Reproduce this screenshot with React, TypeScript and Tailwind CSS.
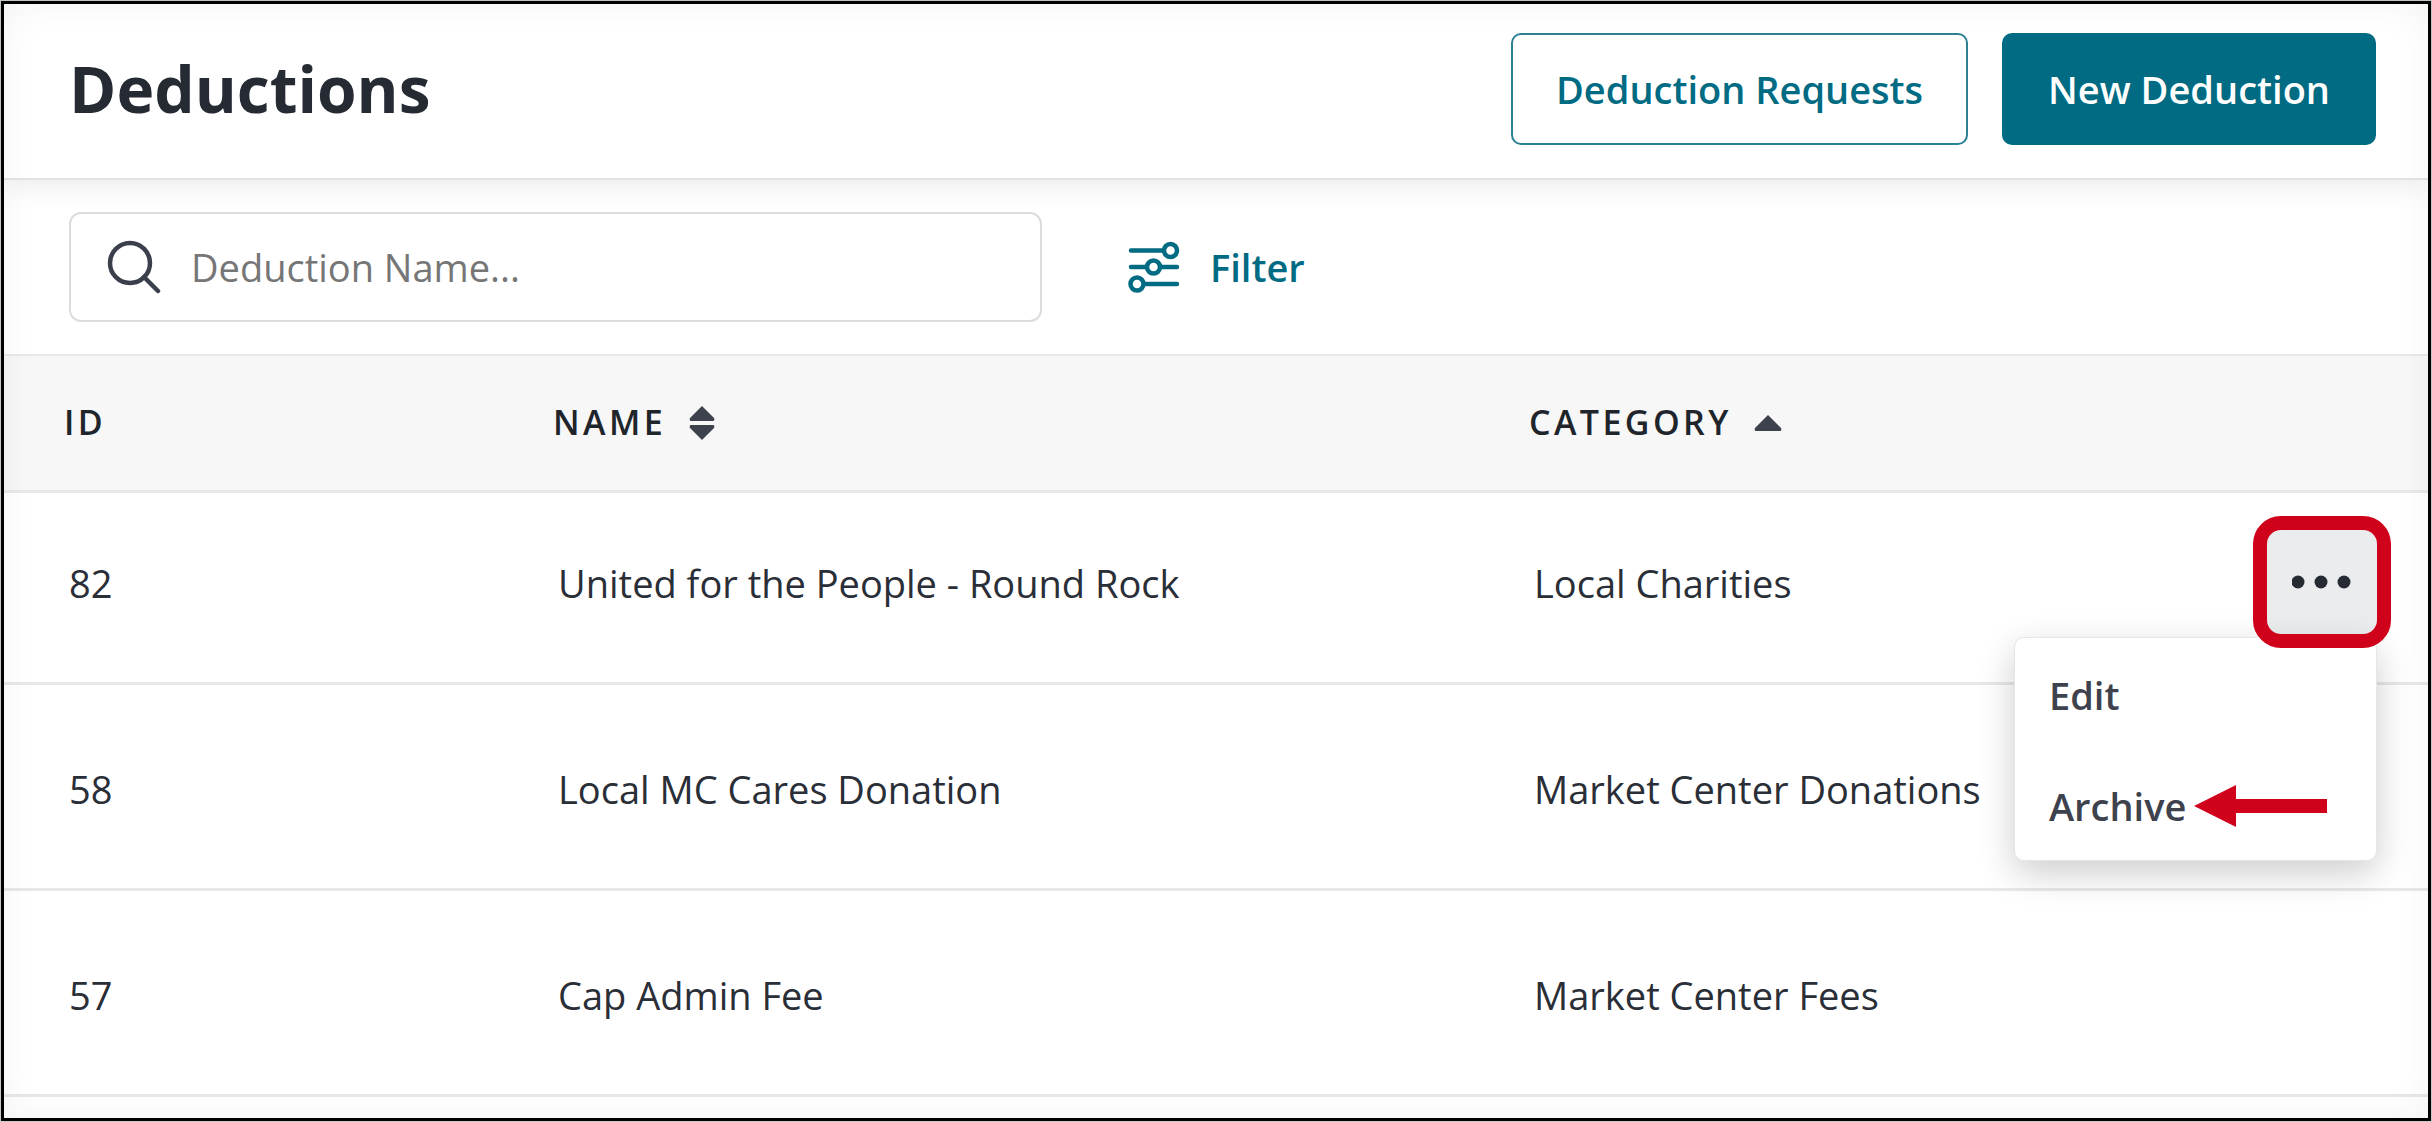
import React from 'react';

interface Deduction {
  id: number;
  name: string;
  category: string;
}

const DEDUCTIONS: Deduction[] = [
  { id: 82, name: 'United for the People - Round Rock', category: 'Local Charities' },
  { id: 58, name: 'Local MC Cares Donation', category: 'Market Center Donations' },
  { id: 57, name: 'Cap Admin Fee', category: 'Market Center Fees' },
];

const App: React.FC = () => (
  <div className="min-h-screen flex bg-[#c4ccc6] p-px font-['Open_Sans',sans-serif] text-[#2a2e37]">
    <div className="relative grow border-3 border-black bg-white">
      <header className="relative flex items-center justify-between h-[176px] pl-[65px] pr-[52px] pb-1 border-b-2 border-[#e3e3e3] shadow-[0_4px_28px_rgba(0,0,0,0.09)]">
        <h1 className="text-[64px] leading-[80px] font-bold text-[#262a33]">Deductions</h1>
        <div className="flex gap-[34px]">
          <button className="h-[112px] px-[43px] rounded-[10px] border-2 border-[#2b8093] bg-white text-[38px] font-semibold text-[#006b82]">
            Deduction Requests
          </button>
          <button className="h-[112px] px-[46px] rounded-[10px] bg-[#006b82] text-[38px] font-semibold text-white">
            New Deduction
          </button>
        </div>
      </header>

      <div className="flex items-center h-[174px] pl-[65px]">
        <label className="flex items-center w-[973px] h-[110px] pl-[36px] gap-[30px] rounded-[12px] border-2 border-[#dcdcdc] bg-white">
          <SearchIcon />
          <input
            type="text"
            aria-label="Deduction Name"
            placeholder="Deduction Name..."
            className="grow text-[38px] outline-none placeholder:text-[#767676]"
          />
        </label>
        <button className="flex items-center gap-[30px] ml-[86px] text-[38px] font-semibold text-[#006b82]">
          <FilterIcon />
          Filter
        </button>
      </div>

      <table className="w-full table-fixed border-separate border-spacing-0 text-left">
        <thead className="text-[34px] text-[#20242b]">
          <tr className="h-[139px] bg-[#f7f7f7]">
            <HeaderCell label="ID" className="w-[489px]" />
            <HeaderCell label="NAME" className="w-[976px]" icon={<SortIcon />} />
            <HeaderCell label="CATEGORY" icon={<SortAscIcon />} />
            <th className="w-[180px] border-t-2 border-b-3 border-[#e8e8e8]" aria-label="Actions" />
          </tr>
        </thead>
        <tbody className="text-[38px]">
          {DEDUCTIONS.map((d, i) => (
            <tr key={d.id} className={i === 0 ? 'h-[192px] *:pb-2' : 'h-[206px] *:pt-[6px]'}>
              <td className="pl-[65px] border-b-3 border-[#e8e8e8]">{d.id}</td>
              <td className="pl-[65px] border-b-3 border-[#e8e8e8]">{d.name}</td>
              <td className="pl-[65px] border-b-3 border-[#e8e8e8] whitespace-nowrap">{d.category}</td>
              <td className="pr-[51px] border-b-3 border-[#e8e8e8]">{i === 0 && <RowActions />}</td>
            </tr>
          ))}
        </tbody>
      </table>

      <div className="absolute inset-0 pointer-events-none shadow-[inset_0_0_36px_rgba(0,0,0,0.05)]" />
    </div>
  </div>
);

const HeaderCell: React.FC<{ label: string; className?: string; icon?: React.ReactNode }> = ({
  label,
  className = '',
  icon,
}) => (
  <th className={`pl-[60px] pb-px border-t-2 border-b-3 border-[#e8e8e8] font-semibold ${className}`}>
    <span className="flex items-center gap-[22px]">
      <span className="tracking-widest">{label}</span>
      {icon}
    </span>
  </th>
);

const RowActions: React.FC = () => (
  <div className="relative ml-auto mb-1 w-[110px]">
    <button
      aria-label="Row actions"
      className="flex items-center justify-center w-[110px] h-[104px] bg-[#ebecee]"
    >
      <svg width="60" height="14" viewBox="0 0 60 14" fill="#262a33">
        <circle cx="6" cy="7" r="6.5" />
        <circle cx="29" cy="7" r="6.5" />
        <circle cx="52" cy="7" r="6.5" />
      </svg>
    </button>
    <div className="absolute z-20 -inset-[14px] rounded-[28px] border-14 border-[#d0021b] pointer-events-none" />
    <div className="absolute z-10 top-[107px] right-0 w-[363px] rounded-[10px] border border-[#e6e6e6] bg-white shadow-[0_12px_36px_rgba(0,0,0,0.2)] text-[38px] font-semibold text-[#3d424d]">
      <button className="flex items-center w-full h-[111px] pt-1 pl-[34px]">Edit</button>
      <button className="flex items-center w-full h-[111px] pt-1 pl-[34px] gap-2">
        Archive
        <ArrowIcon />
      </button>
    </div>
  </div>
);

const SearchIcon: React.FC = () => (
  <svg className="shrink-0" width="54" height="54" viewBox="0 0 54 54" fill="none" stroke="#3a3f4b" strokeWidth="4.500" strokeLinecap="round">
    <circle cx="23" cy="23" r="20" />
    <path d="M37 37l14 14" />
  </svg>
);

const FilterIcon: React.FC = () => (
  <svg width="52" height="52" viewBox="0 0 52 52" fill="none" stroke="#006b82" strokeWidth="4.500" strokeLinecap="round">
    <path d="M3 9.500h32M3 26h14M34 26h15M18 43h31" />
    <circle cx="42.500" cy="9.500" r="6.500" />
    <circle cx="25.500" cy="26" r="6.500" />
    <circle cx="9" cy="43" r="6.500" />
  </svg>
);

const SortIcon: React.FC = () => (
  <svg width="28" height="36" viewBox="0 0 28 36" fill="#3d424d">
    <path d="M14 1l12 12q1 3-1 3H3q-2 0-1-3z" />
    <path d="M14 35l12-12q1-3-1-3H3q-2 0-1 3z" />
  </svg>
);

const SortAscIcon: React.FC = () => (
  <svg width="28" height="18" viewBox="0 0 28 18" fill="#3d424d">
    <path d="M14 1l13 13q1 3-1 3H2q-2 0-1-3z" />
  </svg>
);

const ArrowIcon: React.FC = () => (
  <svg width="134" height="42" viewBox="0 0 134 42" fill="#d0021b">
    <path d="M0 21L42 0v14h91v14H42v14z" />
  </svg>
);

export default App;
